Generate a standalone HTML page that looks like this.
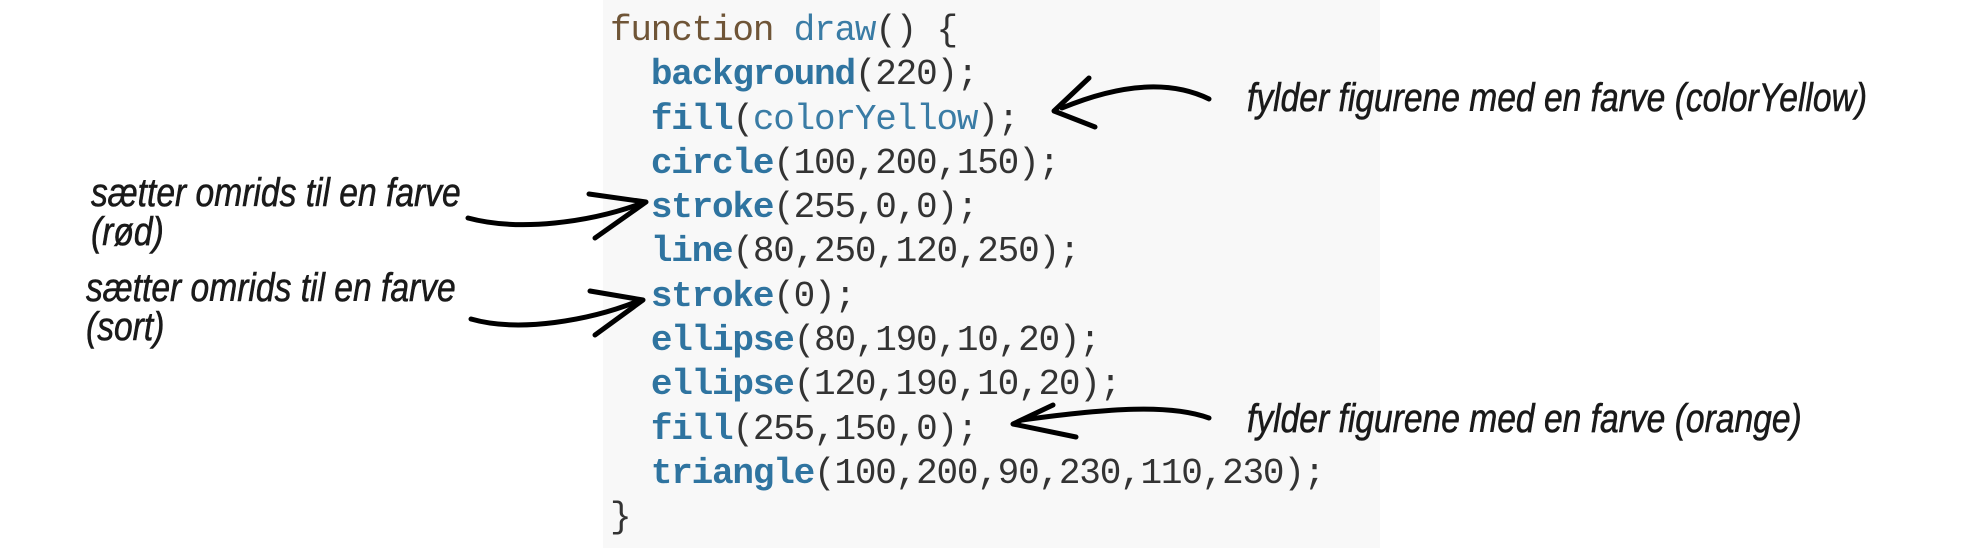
<!DOCTYPE html>
<html><head><meta charset="utf-8"><style>
html,body{margin:0;padding:0;background:#fff;width:1984px;height:548px;overflow:hidden;position:relative}
.box{position:absolute;left:603px;top:0;width:777px;height:548px;background:#f8f8f8}
.code{position:absolute;left:610px;top:0;font-family:"Liberation Mono",monospace;font-size:36px;letter-spacing:-1.2px;color:#333;white-space:pre;line-height:44.3px;padding-top:9px}
.k{color:#6f5537}.b{color:#3a7ca5}.f{color:#2f74a0;font-weight:bold}
.n{position:absolute;font-family:"Liberation Sans",sans-serif;font-style:italic;font-size:40px;color:#1a1a1a;-webkit-text-stroke:0.6px #1a1a1a;white-space:nowrap;transform-origin:0 0;transform:scaleX(0.84);line-height:39px}
</style></head><body>
<div class="box"></div>
<div class="code"><span class="k">function</span> <span class="b">draw</span>() {
  <span class="f">background</span>(220);
  <span class="f">fill</span>(<span class="b">colorYellow</span>);
  <span class="f">circle</span>(100,200,150);
  <span class="f">stroke</span>(255,0,0);
  <span class="f">line</span>(80,250,120,250);
  <span class="f">stroke</span>(0);
  <span class="f">ellipse</span>(80,190,10,20);
  <span class="f">ellipse</span>(120,190,10,20);
  <span class="f">fill</span>(255,150,0);
  <span class="f">triangle</span>(100,200,90,230,110,230);
}</div>
<div class="n" style="left:1247px;top:79px">fylder figurene med en farve (colorYellow)</div>
<div class="n" style="left:1247px;top:400px">fylder figurene med en farve (orange)</div>
<div class="n" style="left:91px;top:174px">sætter omrids til en farve<br>(rød)</div>
<div class="n" style="left:86px;top:269px">sætter omrids til en farve<br>(sort)</div>
<svg width="1984" height="548" style="position:absolute;left:0;top:0" fill="none" stroke="#000" stroke-width="5" stroke-linecap="round" stroke-linejoin="round">
<path d="M1209 99 C1170 80 1120 84 1062 108"/>
<path d="M1089 78 L1054 111 L1095 127"/>
<path d="M1209 418 C1170 404 1110 408 1022 420"/>
<path d="M1053 405 L1013 424 L1076 437"/>
<path d="M468 218 C520 232 590 222 640 204"/>
<path d="M589 194 L646 202 L595 238"/>
<path d="M471 319 C520 333 590 320 636 302"/>
<path d="M590 291 L643 300 L595 335"/>
</svg>
</body></html>
